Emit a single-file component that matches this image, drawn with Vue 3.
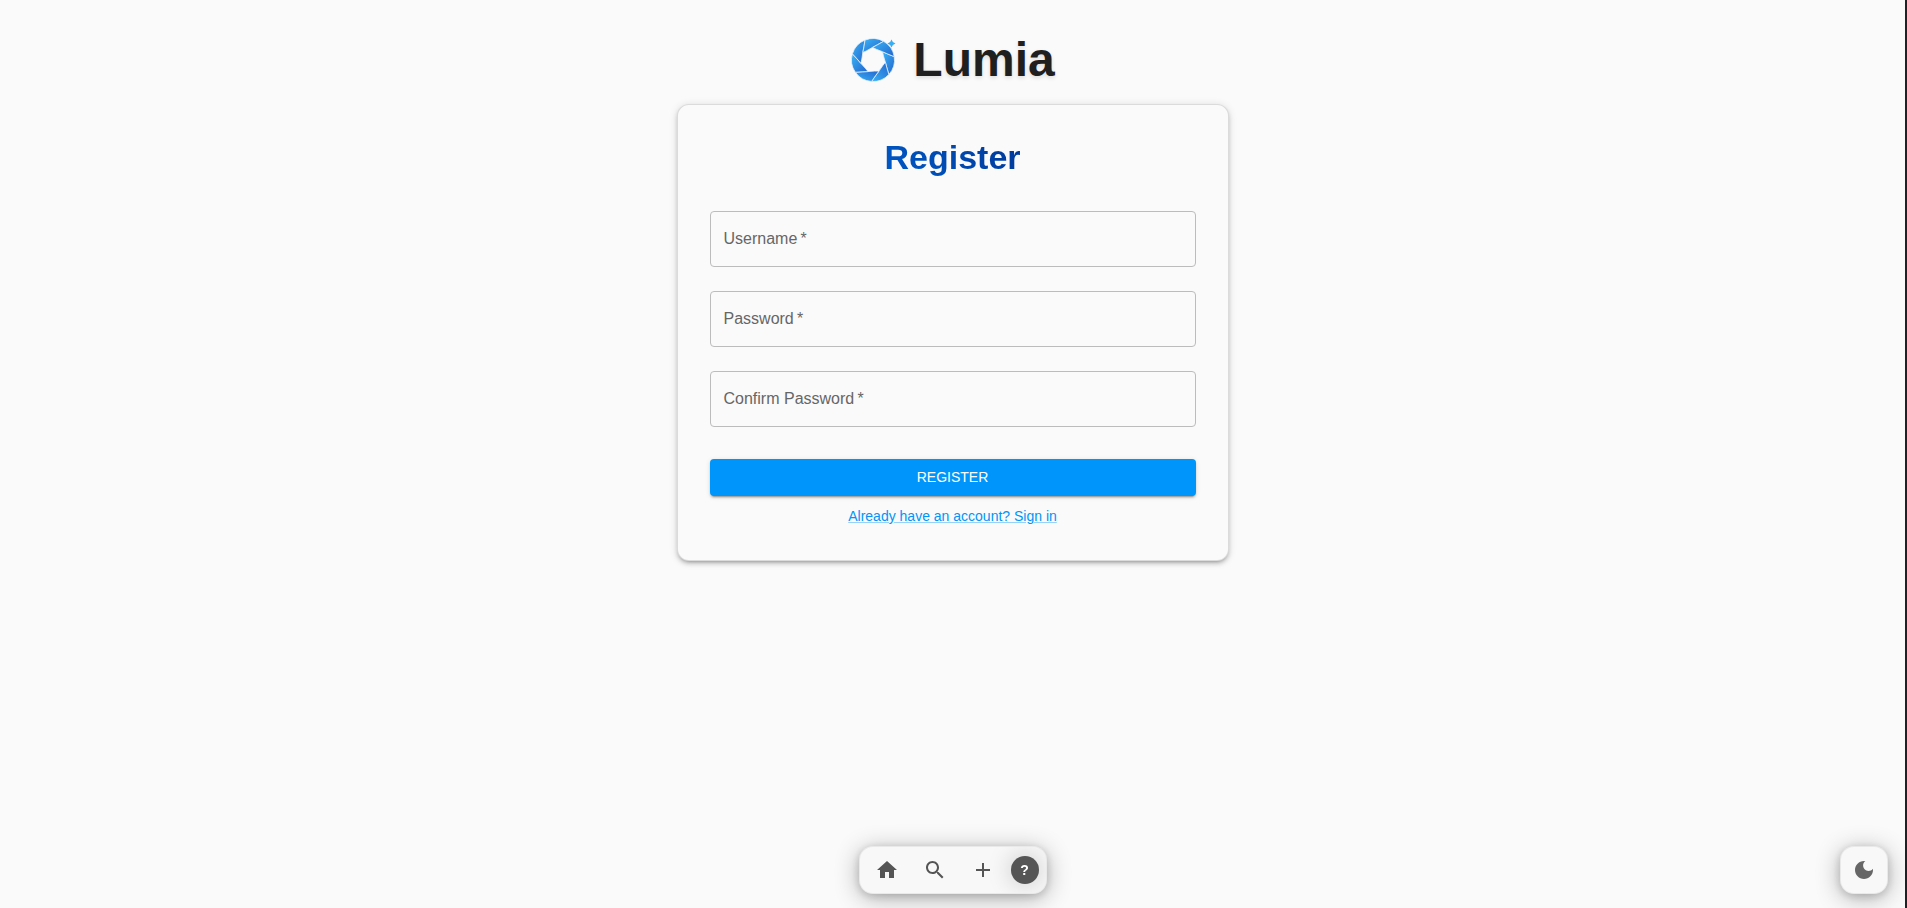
<script setup>
import { ref } from 'vue'

const fields = ref([
  { id: 'username', label: 'Username', type: 'text', value: '', autocomplete: 'username' },
  { id: 'password', label: 'Password', type: 'password', value: '', autocomplete: 'new-password' },
  { id: 'confirm', label: 'Confirm Password', type: 'password', value: '', autocomplete: 'new-password' },
])

const STEP = 360 / 7
const point = (radius, deg) => {
  const a = (deg * Math.PI) / 180
  return `${(radius * Math.cos(a)).toFixed(2)} ${(radius * Math.sin(a)).toFixed(2)}`
}

// Seven aperture blades: outer arc, then two edges that swirl back to the opening.
const blades = Array.from({ length: 7 }, (_, k) => {
  const t = -9 + k * STEP
  return [
    `M${point(21.5, t)}`,
    `A21.5 21.5 0 0 1 ${point(21.5, t + STEP)}`,
    `Q${point(15.5, t + STEP - 14)} ${point(12.6, t + STEP - 32)}`,
    `L${point(11.2, t - 12)}`,
    `L${point(12.6, t - 32)}`,
    `Q${point(15.5, t - 14)} ${point(21.5, t)}Z`,
  ].join('')
})
</script>

<template>
  <div class="page">
    <header class="brand">
      <svg class="logo" viewBox="-23 -23 46 46" aria-hidden="true">
        <defs>
          <linearGradient id="bladeFill" x1="0" y1="0" x2="1" y2="1">
            <stop offset="0" stop-color="#3ab4f6" />
            <stop offset="1" stop-color="#2264cd" />
          </linearGradient>
          <linearGradient id="bladeFillLow" x1="0" y1="1" x2="1" y2="0">
            <stop offset="0" stop-color="#36b2f5" />
            <stop offset="1" stop-color="#2467d0" />
          </linearGradient>
        </defs>
        <path
          v-for="(d, i) in blades"
          :key="i"
          :d="d"
          :fill="i === 1 || i === 2 ? 'url(#bladeFillLow)' : 'url(#bladeFill)'"
          stroke="#e4f1fb"
          stroke-width="0.8"
          stroke-linejoin="round"
        />
        <path d="M18.5 -20.5Q19.3 -17.3 22.5 -16.5Q19.3 -15.7 18.5 -12.5Q17.7 -15.7 14.5 -16.5Q17.7 -17.3 18.5 -20.5Z" fill="#35aef3" />
      </svg>
      <h1 class="name">Lumia</h1>
    </header>

    <main class="card">
      <h2 class="title">Register</h2>
      <form @submit.prevent>
        <div class="fields">
          <div v-for="f in fields" :key="f.id" class="field">
            <input :id="f.id" v-model="f.value" :type="f.type" :autocomplete="f.autocomplete" placeholder=" " required />
            <label :for="f.id">{{ f.label }}&thinsp;*</label>
          </div>
        </div>
        <button class="submit" type="submit">REGISTER</button>
      </form>
      <a class="signin" href="#signin">Already have an account? Sign in</a>
    </main>

    <div class="floating">
      <nav class="dock" aria-label="Main">
        <button class="tool" type="button" aria-label="Home">
          <svg viewBox="0 0 24 24"><path d="M10 20v-6h4v6h5v-8h3L12 3 2 12h3v8z" /></svg>
        </button>
        <button class="tool" type="button" aria-label="Search">
          <svg viewBox="0 0 24 24"><path d="M15.5 14h-.79l-.28-.27C15.41 12.59 16 11.11 16 9.5 16 5.91 13.09 3 9.5 3S3 5.91 3 9.5 5.91 16 9.5 16c1.61 0 3.09-.59 4.23-1.57l.27.28v.79l5 4.99L20.49 19zm-6 0C7.01 14 5 11.99 5 9.5S7.01 5 9.5 5 14 7.01 14 9.5 11.99 14 9.5 14" /></svg>
        </button>
        <button class="tool" type="button" aria-label="Add">
          <svg viewBox="0 0 24 24"><path d="M19 13h-6v6h-2v-6H5v-2h6V5h2v6h6z" /></svg>
        </button>
        <button class="help" type="button" aria-label="Help">?</button>
      </nav>
    </div>

    <button class="theme" type="button" aria-label="Dark mode">
      <svg viewBox="0 0 24 24"><path d="M12 3c-4.97 0-9 4.03-9 9s4.03 9 9 9 9-4.03 9-9c0-.46-.04-.92-.1-1.36-.98 1.37-2.58 2.26-4.4 2.26-2.98 0-5.4-2.42-5.4-5.4 0-1.81.89-3.42 2.26-4.4-.44-.06-.9-.1-1.36-.1" /></svg>
    </button>
  </div>
</template>

<style>
body {
  margin: 0;
  background: #fafafa;
}
</style>

<style scoped>
.page {
  box-sizing: border-box;
  min-height: 100vh;
  padding: 32px 16px 96px;
  border-right: 2px solid #202124;
  background: #fafafa;
  color: #1f1f1f;
  font-family: "Liberation Sans", Arial, sans-serif;
}
.brand {
  display: flex;
  align-items: center;
  justify-content: center;
  gap: 17px;
  margin-bottom: 16px;
}
.logo {
  width: 46px;
  height: 46px;
}
.name {
  margin: 0;
  font-size: 48px;
  line-height: 56px;
  font-weight: 700;
  text-shadow: 0 2px 4px rgba(0, 0, 0, 0.12);
}
.card {
  box-sizing: border-box;
  display: flex;
  flex-direction: column;
  align-items: center;
  max-width: 552px;
  margin: 0 auto;
  padding: 32px;
  border: 1px solid rgba(0, 0, 0, 0.12);
  border-radius: 12px;
  background: #fafafa;
  box-shadow: 0 3px 3px -2px rgba(0, 0, 0, 0.2), 0 3px 4px 0 rgba(0, 0, 0, 0.14), 0 1px 8px 0 rgba(0, 0, 0, 0.12);
}
.title {
  margin: 0 0 34px;
  font-size: 34px;
  line-height: 40px;
  font-weight: 700;
  color: transparent;
  background: linear-gradient(45deg, #005ac8, #003796);
  background-clip: text;
}
form {
  width: 100%;
}
.fields {
  display: grid;
  gap: 24px;
  margin-bottom: 32px;
}
.field {
  position: relative;
}
.field input {
  box-sizing: border-box;
  display: block;
  width: 100%;
  height: 56px;
  padding: 16px 14px;
  border: 1px solid #bcbcbc;
  border-radius: 4px;
  background: transparent;
  font: inherit;
  font-size: 16px;
}
.field label {
  position: absolute;
  top: 16px;
  left: 14px;
  font-size: 16px;
  line-height: 24px;
  color: #666;
  pointer-events: none;
}
.field input:not(:placeholder-shown) + label {
  top: -8px;
  padding: 0 4px;
  background: #fafafa;
  font-size: 12px;
  line-height: 16px;
}
.submit {
  display: block;
  width: 100%;
  height: 37px;
  padding: 0 0 2px;
  border: 0;
  border-radius: 4px;
  background: #0095fa;
  color: #fff;
  font: inherit;
  font-size: 14px;
  cursor: pointer;
  box-shadow: 0 3px 1px -2px rgba(0, 0, 0, 0.2), 0 2px 2px 0 rgba(0, 0, 0, 0.14), 0 1px 5px 0 rgba(0, 0, 0, 0.12);
}
.signin {
  margin-top: 8px;
  font-size: 14px;
  line-height: 24px;
  color: #0095f6;
  text-decoration-color: rgba(0, 149, 246, 0.4);
}
.floating {
  position: fixed;
  right: 2px;
  bottom: 14px;
  left: 0;
  display: flex;
  justify-content: center;
  pointer-events: none;
}
.dock,
.theme {
  box-sizing: border-box;
  height: 48px;
  border: 1px solid rgba(0, 0, 0, 0.06);
  border-radius: 14px;
  background: #f8f8f8;
  box-shadow: 0 4px 24px rgba(0, 0, 0, 0.3), 0 2px 8px rgba(0, 0, 0, 0.16);
}
.dock {
  display: flex;
  align-items: center;
  gap: 8px;
  padding: 0 7px;
  overflow: hidden;
  pointer-events: auto;
}
.tool {
  display: grid;
  place-items: center;
  width: 40px;
  height: 40px;
  padding: 0;
  border: 0;
  background: none;
  cursor: pointer;
}
.tool svg {
  width: 24px;
  height: 24px;
  fill: #555;
}
.help {
  width: 28px;
  height: 28px;
  padding: 0;
  border: 0;
  border-radius: 50%;
  background: #555;
  color: #fff;
  font: inherit;
  font-size: 14px;
  font-weight: 700;
  cursor: pointer;
  box-shadow: 0 0 24px rgba(0, 0, 0, 0.22);
}
.theme {
  position: fixed;
  right: 19px;
  bottom: 14px;
  display: grid;
  place-items: center;
  width: 48px;
  padding: 0;
  cursor: pointer;
}
.theme svg {
  width: 24px;
  height: 24px;
  fill: #666;
}
</style>
